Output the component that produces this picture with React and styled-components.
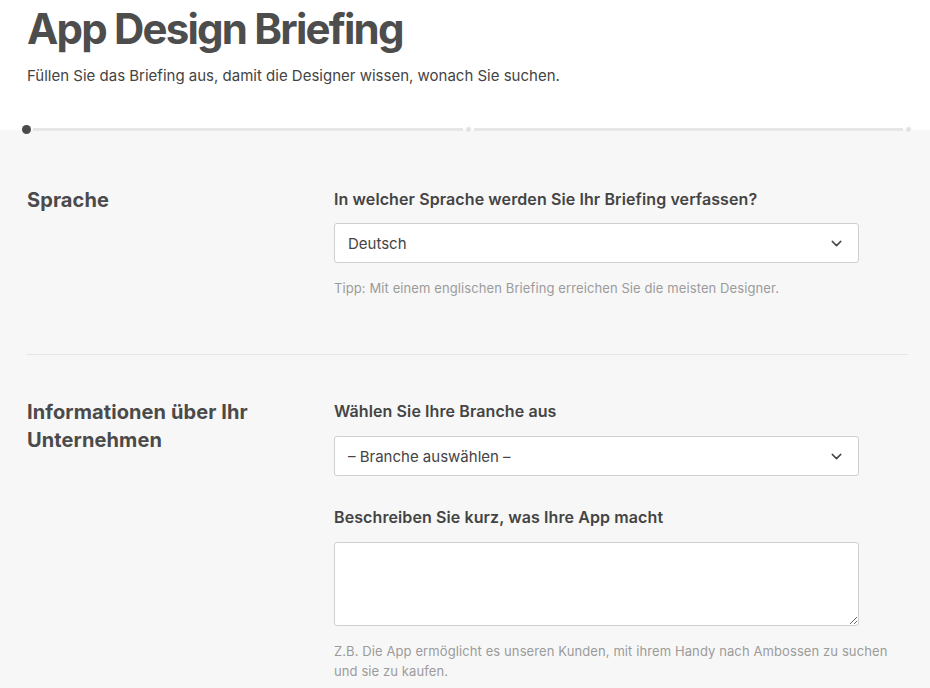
import React from "react";
import styled, { createGlobalStyle } from "styled-components";
import { ChevronDown } from "lucide-react";

const GlobalStyle = createGlobalStyle`
  body {
    margin: 0;
    background: #f7f7f7;
    font-family: Inter, Roboto, "Liberation Sans", sans-serif;
    color: #444;
  }
`;

// Kopfbereich (weiß)
const Header = styled.header`
  background: #fff;
  padding: 4px 27px 0;
  height: 125px;
  box-sizing: border-box;
`;

const Title = styled.h1`
  margin: 0;
  font-size: 42px;
  line-height: 50px;
  font-weight: 700;
  letter-spacing: -1.8px;
  color: #4d4d4d;
`;

const Subtitle = styled.p`
  margin: 12px 0 0;
  font-size: 15px;
  line-height: 20px;
  color: #444;
`;

// Fortschrittsanzeige
const Stepper = styled.div`
  display: flex;
  align-items: center;
  height: 9px;
  padding: 0 18px 0 22px;
  background: linear-gradient(#fff 50%, #f7f7f7 50%);
`;

const Dot = styled.span`
  flex: none;
  width: ${(p) => (p.active ? "9px" : "7px")};
  height: ${(p) => (p.active ? "9px" : "7px")};
  border-radius: 50%;
  box-sizing: border-box;
  background: ${(p) => (p.active ? "#4a4a4a" : "#e2e2e2")};
  border: ${(p) => (p.active ? "none" : "1.5px solid #fff")};
`;

const Line = styled.span`
  flex: 1;
  height: 3px;
  margin: 0 2px;
  background: #e6e6e6;
`;

const Main = styled.main`
  padding: 0 22px 0 27px;
`;

const Section = styled.section`
  display: grid;
  grid-template-columns: 307px 1fr;
  padding: ${(p) => p.pad};
  border-bottom: ${(p) => (p.last ? "none" : "1px solid #e4e4e4")};
`;

const SectionTitle = styled.h2`
  margin: -2px 0 0;
  font-size: 20px;
  line-height: 28px;
  font-weight: 700;
  letter-spacing: 0.1px;
  color: #4a4a4a;
  max-width: 250px;
`;

const Fields = styled.div`
  display: flex;
  flex-direction: column;
`;

const Label = styled.label`
  font-size: 16px;
  line-height: 22px;
  font-weight: 600;
  letter-spacing: 0.1px;
  color: #444;
  margin-top: ${(p) => p.gap || "0"};
`;

const SelectBox = styled.div`
  width: 525px;
  height: 40px;
  margin-top: ${(p) => p.gap || "13px"};
  box-sizing: border-box;
  background: #fff;
  border: 1px solid #cfcfcf;
  border-radius: 3px;
  display: flex;
  align-items: center;
  justify-content: space-between;
  padding: 0 13px;
  font-size: 15px;
  color: #444;
`;

const TextArea = styled.textarea`
  width: 525px;
  height: 84px;
  margin-top: 14px;
  box-sizing: border-box;
  background: #fff;
  border: 1px solid #cfcfcf;
  border-radius: 3px;
  resize: vertical;
  font-family: inherit;
  font-size: 14px;
  padding: 10px 13px;
`;

const Hint = styled.p`
  margin: 15px 0 0;
  max-width: 570px;
  font-size: 13px;
  line-height: 20px;
  letter-spacing: 0.1px;
  color: #9b9b9b;
`;

export default function App() {
  return (
    <>
      <GlobalStyle />
      <Header>
        <Title>App Design Briefing</Title>
        <Subtitle>
          Füllen Sie das Briefing aus, damit die Designer wissen, wonach Sie suchen.
        </Subtitle>
      </Header>

      <Stepper>
        <Dot active />
        <Line />
        <Dot />
        <Line />
        <Dot />
      </Stepper>

      <Main>
        <Section pad="54px 0 56px">
          <SectionTitle>Sprache</SectionTitle>
          <Fields>
            <Label>In welcher Sprache werden Sie Ihr Briefing verfassen?</Label>
            <SelectBox>
              Deutsch
              <ChevronDown size={17} strokeWidth={2} color="#444" />
            </SelectBox>
            <Hint>Tipp: Mit einem englischen Briefing erreichen Sie die meisten Designer.</Hint>
          </Fields>
        </Section>

        <Section pad="45px 0 20px" last>
          <SectionTitle>Informationen über Ihr Unternehmen</SectionTitle>
          <Fields>
            <Label>Wählen Sie Ihre Branche aus</Label>
            <SelectBox gap="14px">
              – Branche auswählen –
              <ChevronDown size={17} strokeWidth={2} color="#444" />
            </SelectBox>
            <Label gap="30px">Beschreiben Sie kurz, was Ihre App macht</Label>
            <TextArea />
            <Hint>
              Z.B. Die App ermöglicht es unseren Kunden, mit ihrem Handy nach Ambossen zu suchen und
              sie zu kaufen.
            </Hint>
          </Fields>
        </Section>
      </Main>
    </>
  );
}
